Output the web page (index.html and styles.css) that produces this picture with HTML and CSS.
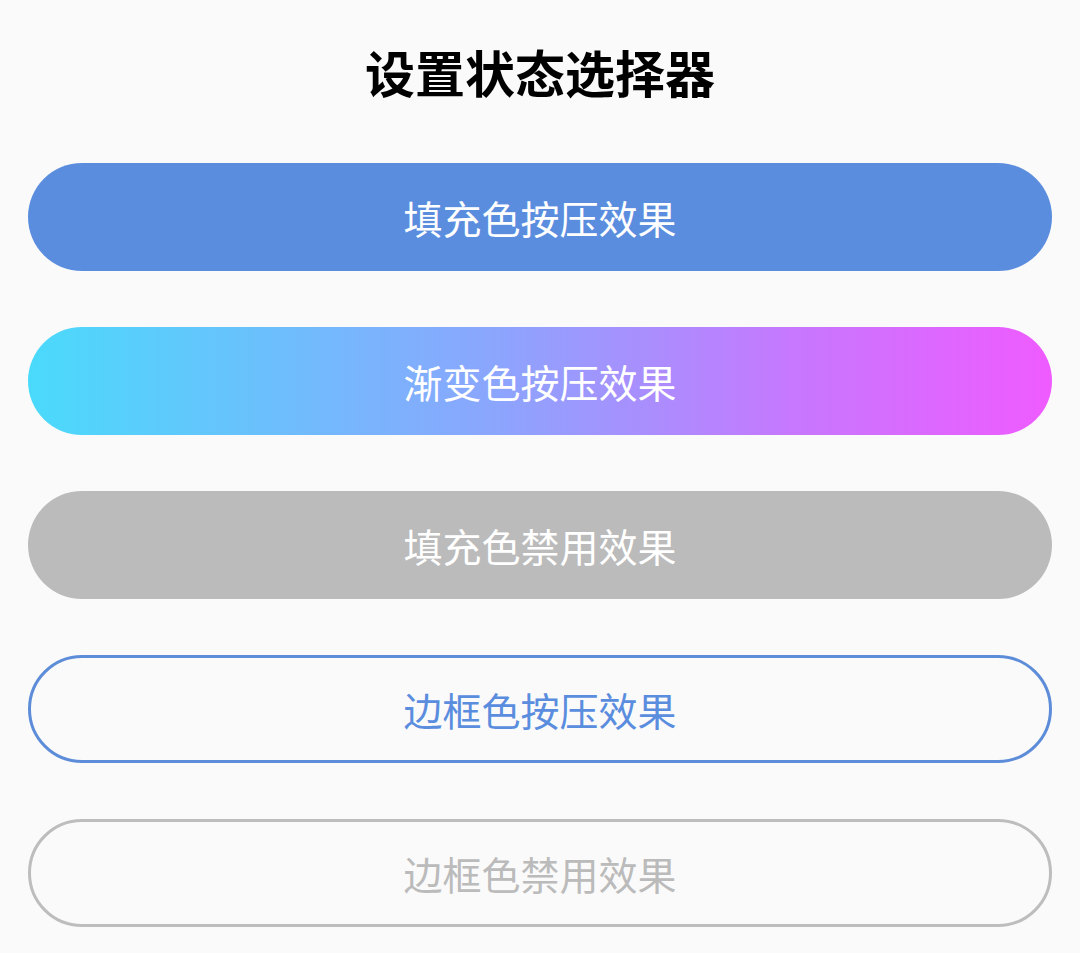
FILE: index.html
```html
<!DOCTYPE html>
<html lang="zh-CN">
<head>
<meta charset="utf-8">
<title>设置状态选择器</title>
<link rel="stylesheet" href="styles.css">
</head>
<body>
<main class="page">
  <h1 class="title">设置状态选择器</h1>
  <div class="buttons">
    <div class="btn btn-fill">填充色按压效果</div>
    <div class="btn btn-gradient">渐变色按压效果</div>
    <div class="btn btn-fill-disabled">填充色禁用效果</div>
    <div class="btn btn-outline">边框色按压效果</div>
    <div class="btn btn-outline-disabled">边框色禁用效果</div>
  </div>
</main>
</body>
</html>
```
FILE: styles.css
```css
html, body {
  margin: 0;
  padding: 0;
  background: #fafafa;
}
body {
  font-family: "Noto Sans CJK SC", "Noto Sans", sans-serif;
  width: 1080px;
  height: 953px;
  overflow: hidden;
}
.page {
  padding: 36px 28px 0;
}
.title {
  margin: 0 0 57px;
  height: 70px;
  line-height: 70px;
  font-size: 50px;
  font-weight: 700;
  text-align: center;
  color: #000;
}
.buttons {
  display: flex;
  flex-direction: column;
  gap: 56px;
}
.btn {
  box-sizing: border-box;
  height: 108px;
  border-radius: 54px;
  display: flex;
  align-items: center;
  justify-content: center;
  font-size: 39px;
  color: #fff;
}
.btn-fill {
  background: #5b8ddf;
}
.btn-gradient {
  background: linear-gradient(to right, #4adafb 0%, #8aa6fd 45%, #c777fe 75%, #ef5bff 100%);
}
.btn-fill-disabled {
  background: #bbbbbb;
}
.btn-outline {
  border: 3px solid #5d8dd8;
  color: #5b8ddf;
}
.btn-outline-disabled {
  border: 3px solid #bdbdbd;
  color: #bbbbbb;
}
```
